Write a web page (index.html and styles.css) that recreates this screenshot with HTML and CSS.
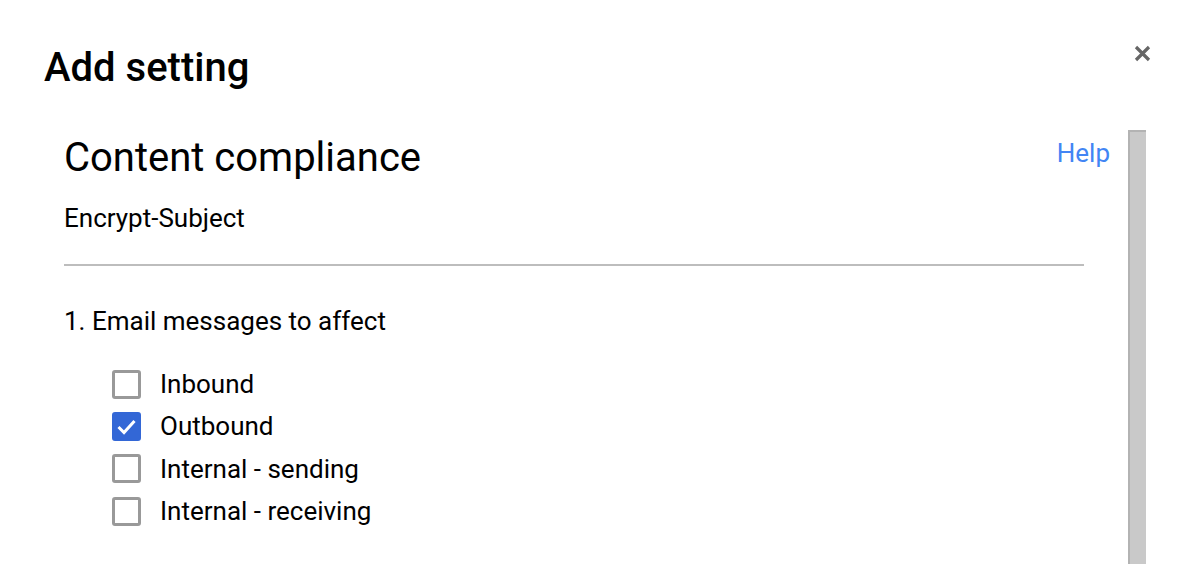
FILE: index.html
```html
<!DOCTYPE html>
<html>
<head>
<meta charset="utf-8">
<link rel="stylesheet" href="styles.css">
</head>
<body>
<div class="dialog">
  <div class="dialog-header">
    <h1 class="dialog-title">Add setting</h1>
    <button class="close-btn" aria-label="Close">
      <svg width="17" height="17" viewBox="0 0 17 17"><path d="M2 2 L15 15 M15 2 L2 15" stroke="#666" stroke-width="3.2" stroke-linecap="butt"/></svg>
    </button>
  </div>
  <div class="dialog-body">
    <div class="content">
      <div class="section-head">
        <h2 class="section-title">Content compliance</h2>
        <a class="help-link" href="#">Help</a>
      </div>
      <div class="setting-name">Encrypt-Subject</div>
      <hr class="divider">
      <div class="step-title">1. Email messages to affect</div>
      <ul class="options">
        <li class="option"><span class="checkbox"></span><span class="label">Inbound</span></li>
        <li class="option"><span class="checkbox checked"><svg width="23" height="23" viewBox="0 0 23 23"><path d="M3.5 12 L9 17.5 L19.5 6" fill="none" stroke="#fff" stroke-width="3"/></svg></span><span class="label">Outbound</span></li>
        <li class="option"><span class="checkbox"></span><span class="label">Internal - sending</span></li>
        <li class="option"><span class="checkbox"></span><span class="label">Internal - receiving</span></li>
      </ul>
    </div>
    <div class="scrollbar"></div>
  </div>
</div>
</body>
</html>
```

FILE: styles.css
```css
html, body {
  margin: 0;
  padding: 0;
  background: #fff;
  height: 100%;
  overflow: hidden;
}
body {
  font-family: Roboto, "Liberation Sans", sans-serif;
  color: #000;
}
.dialog {
  display: flex;
  flex-direction: column;
  height: 100%;
}
.dialog-header {
  display: flex;
  justify-content: space-between;
  align-items: flex-start;
  padding: 44px 37px 0 44px;
  height: 86px;
  box-sizing: border-box;
}
.dialog-title {
  margin: 0;
  font-size: 40px;
  font-weight: 500;
  line-height: 48px;
}
.close-btn {
  border: 0;
  background: none;
  padding: 0;
  margin-top: 1px;
  width: 17px;
  height: 17px;
  display: block;
}
.close-btn svg { display: block; }
.dialog-body {
  flex: 1;
  display: flex;
  padding-top: 44px;
  padding-left: 64px;
  min-height: 0;
}
.content {
  width: 1046px;
}
.section-head {
  display: flex;
  justify-content: space-between;
  align-items: flex-start;
}
.section-title {
  margin: 0;
  font-size: 40px;
  font-weight: 400;
  line-height: 56px;
}
.help-link {
  color: #4285f4;
  text-decoration: none;
  font-size: 26px;
  line-height: 46px;
}
.setting-name {
  margin-top: 16px;
  font-size: 26px;
  line-height: 32px;
}
.divider {
  border: 0;
  height: 2px;
  background: #bdbdbd;
  margin: 30px 26px 0 0;
}
.step-title {
  margin-top: 39px;
  font-size: 26px;
  line-height: 32px;
}
.options {
  list-style: none;
  margin: 26px 0 0 48px;
  padding: 0;
}
.option {
  display: flex;
  align-items: center;
  height: 42.3px;
}
.checkbox {
  width: 23px;
  height: 23px;
  border: 3px solid #999;
  border-radius: 3px;
  margin-right: 19px;
  display: flex;
  align-items: center;
  justify-content: center;
  box-sizing: content-box;
}
.checkbox.checked {
  background: #3367d6;
  border-color: #3367d6;
}
.checkbox svg { display: block; }
.label {
  font-size: 26px;
}
.scrollbar {
  width: 16px;
  margin-left: 18px;
  background: #c9c9c9;
  border-top: 2px solid #b3b3b3;
  border-left: 2px solid #b3b3b3;
}
```
